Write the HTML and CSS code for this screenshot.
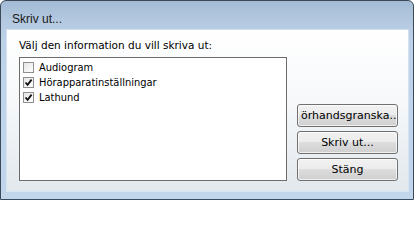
FILE: index.html
```html
<!DOCTYPE html>
<html>
<head>
<meta charset="utf-8">
<link rel="stylesheet" href="styles.css">
</head>
<body>
<div class="window">
  <div class="titlebar"><span class="title">Skriv ut...</span></div>
  <div class="client">
    <div class="leftcol">
      <div class="label">Välj den information du vill skriva ut:</div>
      <div class="listbox">
        <div class="item"><span class="cb"></span><span class="itext">Audiogram</span></div>
        <div class="item"><span class="cb"><svg class="tick" viewBox="0 0 9 9" width="9" height="9"><path d="M1.5 4.5 L3.6 6.8 L7.6 1.6" fill="none" stroke="#111" stroke-width="1.8"/></svg></span><span class="itext">Hörapparatinställningar</span></div>
        <div class="item"><span class="cb"><svg class="tick" viewBox="0 0 9 9" width="9" height="9"><path d="M1.5 4.5 L3.6 6.8 L7.6 1.6" fill="none" stroke="#111" stroke-width="1.8"/></svg></span><span class="itext">Lathund</span></div>
      </div>
    </div>
    <div class="rightcol">
      <div class="btn"><div class="bface"><span class="btext">Förhandsgranska...</span></div></div>
      <div class="btn"><div class="bface"><span class="btext">Skriv ut...</span></div></div>
      <div class="btn"><div class="bface"><span class="btext">Stäng</span></div></div>
    </div>
  </div>
</div>
</body>
</html>
```
FILE: styles.css
```css
html, body {
  margin: 0;
  padding: 0;
  background: #ffffff;
}
.window {
  box-sizing: border-box;
  width: 414px;
  height: 200px;
  border: 1px solid #3b4a5a;
  border-radius: 6px 6px 0 0;
  background: linear-gradient(to bottom, #a3bbd6 0px, #b4c9e0 20px, #bdd2e9 40px, #c2d6eb 100%);
  display: flex;
  flex-direction: column;
  padding: 0 5px 8px 6px;
}
.titlebar {
  height: 29px;
  display: flex;
  align-items: center;
  padding-left: 5px;
  padding-top: 6px;
  box-sizing: border-box;
}
.title {
  font-family: "Liberation Sans", Arial, sans-serif;
  font-size: 12px;
  color: #1a1a1a;
}
.client {
  flex: 1;
  display: flex;
  background: linear-gradient(to bottom, #ffffff 0%, #f6f8fa 45%, #e2e8ed 100%);
  padding: 8px 10px 10px 12px;
  box-sizing: border-box;
  box-shadow: 0 0 0 1px rgba(255,255,255,0.35);
}
.leftcol {
  width: 268px;
  display: flex;
  flex-direction: column;
}
.label {
  font-family: "DejaVu Sans", sans-serif;
  font-size: 10.5px;
  line-height: 14px;
  height: 19px;
  color: #000;
}
.listbox {
  box-sizing: border-box;
  width: 268px;
  height: 124px;
  border: 1px solid #6c6c6c;
  background: #ffffff;
  padding: 2px 0 0 2px;
}
.item {
  height: 15px;
  display: flex;
  align-items: center;
}
.cb {
  box-sizing: border-box;
  width: 11px;
  height: 11px;
  border: 1px solid #8e8f8f;
  background: linear-gradient(135deg, #e6e6e6, #ffffff);
  margin-left: 1px;
  margin-right: 5px;
  display: flex;
  align-items: center;
  justify-content: center;
}
.tick {
  display: block;
}
.itext {
  font-family: "DejaVu Sans Condensed", "DejaVu Sans", sans-serif;
  font-size: 11px;
  color: #000;
}
.rightcol {
  margin-left: 10px;
  width: 101px;
  display: flex;
  flex-direction: column;
  justify-content: flex-end;
  gap: 4px;
}
.btn {
  box-sizing: border-box;
  width: 101px;
  height: 23px;
  border: 1px solid #707070;
  border-radius: 3px;
  background: linear-gradient(to bottom, #f2f2f2 0%, #ebebeb 49%, #dddddd 50%, #cfcfcf 100%);
  box-shadow: inset 0 0 0 1px rgba(255,255,255,0.7);
  overflow: hidden;
}
.bface {
  width: 100%;
  height: 100%;
  display: flex;
  align-items: center;
  justify-content: center;
  clip-path: inset(0 1px 0 3px);
}
.btext {
  flex: none;
  white-space: nowrap;
  margin: 0 -12px;
  font-family: "DejaVu Sans", sans-serif;
  font-size: 11px;
  color: #000;
}
```
